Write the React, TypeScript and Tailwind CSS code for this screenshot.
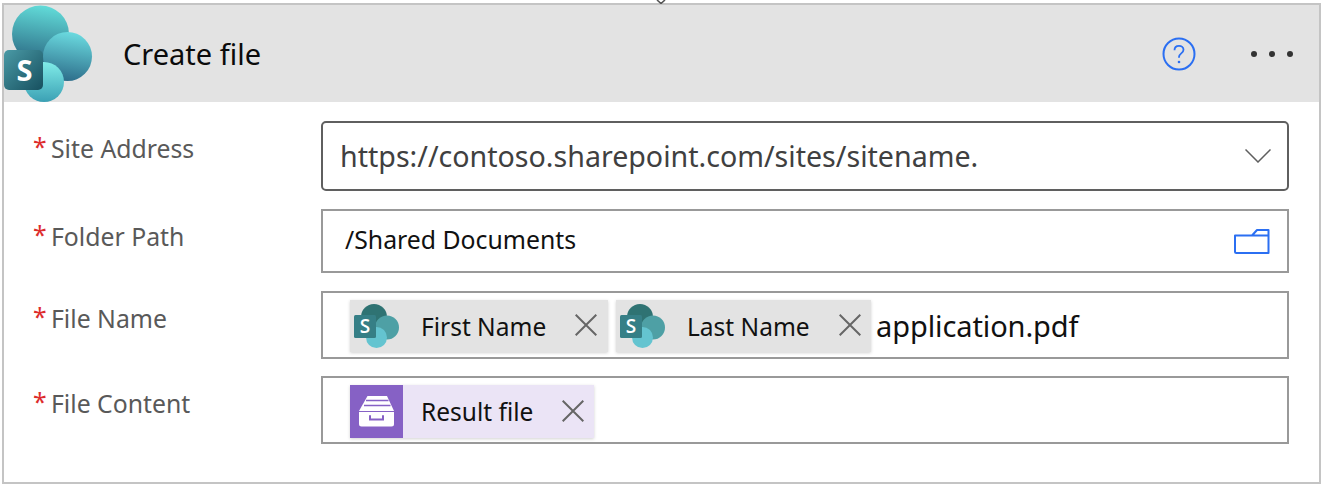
import React from "react";

const FONT = "font-['Noto_Sans','Open_Sans',sans-serif]";

function SpLogo({ uid }: { uid: string }) {
  return (
    <svg viewBox="0 0 90 98" className="block h-full w-full" aria-hidden="true">
      <defs>
        <linearGradient id={uid + "a"} x1="0.6" y1="0" x2="0.45" y2="1">
          <stop offset="0" stopColor="#62dcd9" />
          <stop offset="1" stopColor="#2c6b85" />
        </linearGradient>
        <linearGradient id={uid + "b"} x1="0.6" y1="0" x2="0.45" y2="1">
          <stop offset="0" stopColor="#6bdbe0" />
          <stop offset="1" stopColor="#2d6d8a" />
        </linearGradient>
        <linearGradient id={uid + "c"} x1="0.5" y1="0" x2="0.5" y2="1">
          <stop offset="0" stopColor="#80ece8" />
          <stop offset="1" stopColor="#3ba0b4" />
        </linearGradient>
        <linearGradient id={uid + "d"} x1="0" y1="0" x2="1" y2="1">
          <stop offset="0" stopColor="#4a9aa6" />
          <stop offset="1" stopColor="#17505f" />
        </linearGradient>
      </defs>
      <circle cx="36.5" cy="29" r="28.5" fill={`url(#${uid}a)`} />
      <circle cx="63.5" cy="51.5" r="24.5" fill={`url(#${uid}b)`} />
      <circle cx="40" cy="77" r="20" fill={`url(#${uid}c)`} />
      <rect x="0" y="45" width="39" height="40" rx="5" fill={`url(#${uid}d)`} />
      <text x="20.5" y="75.5" textAnchor="middle" fontFamily="'Open Sans',sans-serif" fontWeight="700" fontSize="29" fill="#fff">S</text>
    </svg>
  );
}

function SpSmall() {
  return (
    <svg viewBox="0 0 46 44" className="block h-[44px] w-[46px]" aria-hidden="true">
      <circle cx="20" cy="13" r="13" fill="#2f7373" />
      <circle cx="33" cy="23.5" r="12" fill="#4ea0a5" />
      <circle cx="22.5" cy="33.5" r="10.5" fill="#64c4d0" />
      <rect x="0" y="11" width="22" height="23" rx="1.5" fill="#367f86" />
      <text x="11" y="29" textAnchor="middle" fontFamily="'Open Sans',sans-serif" fontWeight="600" fontSize="19" fill="#fff">S</text>
    </svg>
  );
}

function Cross() {
  return (
    <svg viewBox="0 0 22 22" className="h-[22px] w-[22px]" aria-hidden="true">
      <path d="M0.7 0.7 L21.3 21.3 M21.3 0.7 L0.7 21.3" stroke="#666" strokeWidth="2" fill="none" />
    </svg>
  );
}

function Chip({ label, width }: { label: string; width: string }) {
  return (
    <div className={`flex h-[52px] items-center bg-[#e3e3e3] pl-[4px] shadow-[0_1px_3px_rgba(0,0,0,0.18)] ${width}`}>
      <SpSmall />
      <span className="ml-[21px] pt-[2px] text-[24.5px] text-[#111]">{label}</span>
      <span className="mb-[2px] ml-[29px] flex">
        <Cross />
      </span>
    </div>
  );
}

function Label({ text, top, children }: { text: string; top: string; children: React.ReactNode }) {
  return (
    <div className="flex">
      <div className={`flex w-[317px] shrink-0 pl-[29px] text-[24.8px] leading-[34px] text-[#595959] ${top}`}>
        <span className="-mt-[2px] w-[18px] text-[#dd2c2c]">*</span>
        <span>{text}</span>
      </div>
      {children}
    </div>
  );
}

export default function App() {
  return (
    <div className={`relative h-[486px] w-[1323px] bg-white pt-[3px] pl-[2px] pr-[2px] pb-[1px] ${FONT}`}>
      <svg viewBox="0 0 10 4" className="absolute top-0 left-[656px] h-[4px] w-[10px]" aria-hidden="true">
        <path d="M1 0 L5 3.5 L9 0" fill="none" stroke="#555" strokeWidth="1.6" />
      </svg>
      <div className="h-[481px] w-[1319px] border-2 border-[#c4c4c4] bg-white">
        <div className="flex h-[97px] bg-[#e3e3e3]">
          <div className="h-[98px] w-[90px] shrink-0">
            <SpLogo uid="hdr" />
          </div>
          <h1 className="ml-[29px] self-center text-[29px] font-normal text-[#0b0b0b]">Create file</h1>
          <div className="ml-auto flex items-center pr-[26px]">
            <svg viewBox="0 0 34 34" className="h-[34px] w-[34px]" aria-hidden="true">
              <circle cx="17" cy="17" r="15.5" fill="none" stroke="#2b6ff2" strokeWidth="2" />
              <path d="M12.5 13.2c0-2.8 2-4.4 4.5-4.4s4.5 1.6 4.5 4c0 3.6-4.5 3.6-4.5 7.2v.8" fill="none" stroke="#2b6ff2" strokeWidth="1.8" />
              <circle cx="17" cy="25" r="1.3" fill="#2b6ff2" />
            </svg>
            <div className="ml-[55px] flex gap-[12px]">
              <span className="h-[6px] w-[6px] rounded-full bg-[#333]" />
              <span className="h-[6px] w-[6px] rounded-full bg-[#333]" />
              <span className="h-[6px] w-[6px] rounded-full bg-[#333]" />
            </div>
          </div>
        </div>

        <div className="flex flex-col pt-[19px]">
          <Label text="Site Address" top="pt-[10px]">
            <div className="flex h-[70px] w-[968px] items-center justify-between rounded-[5px] border-2 border-[#5f5f5f] pl-[17px] pr-[16px]">
              <span className="text-[28.6px] text-[#404040]">https://contoso.sharepoint.com/sites/sitename.</span>
              <svg viewBox="0 0 26 14" className="h-[14px] w-[26px]" aria-hidden="true">
                <path d="M0.5 0.5 L13 13 L25.5 0.5" fill="none" stroke="#5f5f5f" strokeWidth="1.5" />
              </svg>
            </div>
          </Label>
          <div className="mt-[18px]">
            <Label text="Folder Path" top="pt-[10px]">
              <div className="flex h-[64px] w-[968px] items-center justify-between border-2 border-[#999] pl-[22px] pr-[17px]">
                <span className="pb-[2px] text-[24.8px] text-[#111]">/Shared Documents</span>
                <svg viewBox="0 0 36 27" className="h-[27px] w-[36px]" aria-hidden="true">
                  <path d="M1 7.5 H18 L23 2 H34.5 V25 H2.5 Q1 25 1 23.5 Z M18 7.5 H34.5" fill="none" stroke="#2b6ff2" strokeWidth="2" strokeLinejoin="round" />
                </svg>
              </div>
            </Label>
          </div>
          <div className="mt-[18px]">
            <Label text="File Name" top="pt-[10px]">
              <div className="flex h-[68px] w-[968px] items-center border-2 border-[#999] pl-[27px] pt-[2px]">
                <div className="flex items-center gap-[8px]">
                  <Chip label="First Name" width="w-[258px]" />
                  <Chip label="Last Name" width="w-[255px]" />
                </div>
                <span className="ml-[5px] text-[29px] tracking-[-0.1px] text-[#111]">application.pdf</span>
              </div>
            </Label>
          </div>
          <div className="mt-[17px]">
            <Label text="File Content" top="pt-[10px]">
              <div className="flex h-[68px] w-[968px] items-center border-2 border-[#999] pl-[27px] pt-[3px]">
                <div className="flex h-[53px] w-[244px] items-center bg-[#ebe4f6] shadow-[0_1px_3px_rgba(0,0,0,0.18)]">
                  <svg viewBox="0 0 53 53" className="block h-[53px] w-[53px]" aria-hidden="true">
                    <rect width="53" height="53" fill="#8661c5" />
                    <path d="M17.5 11 H37 L44 26 H9 Z" fill="#fff" />
                    <path d="M16 15.5 H38.5 M14 20.5 H40.5" stroke="#8661c5" strokeWidth="1.5" />
                    <path d="M9 27 H44 V39 Q44 41.5 41.5 41.5 H11.5 Q9 41.5 9 39 Z" fill="#fff" />
                    <path d="M20 31 V34.5 H33 V31" fill="none" stroke="#8661c5" strokeWidth="2" strokeLinecap="round" />
                  </svg>
                  <span className="ml-[18px] pt-[2px] text-[24.5px] text-[#111]">Result file</span>
                  <span className="mb-[2px] ml-[29px] flex">
                    <Cross />
                  </span>
                </div>
              </div>
            </Label>
          </div>
        </div>
      </div>
    </div>
  );
}
